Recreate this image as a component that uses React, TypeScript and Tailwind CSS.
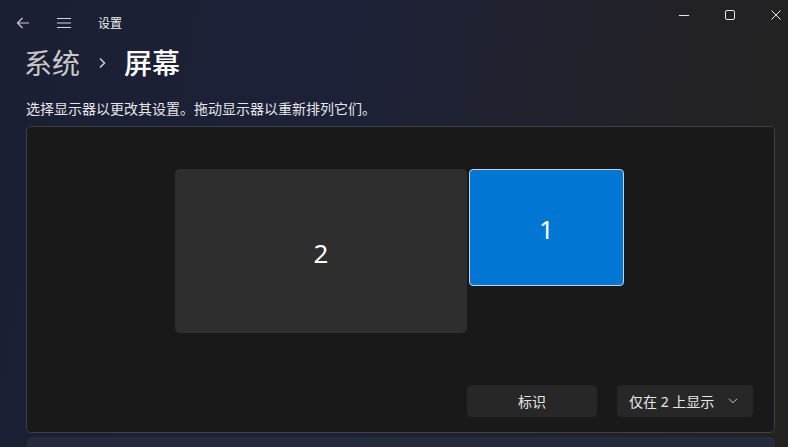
import React from 'react';

const font = { fontFamily: '"Segoe UI", "Noto Sans", "Noto Sans CJK SC", sans-serif' };

const BackIcon = () => (
    <svg width="14" height="12" viewBox="0 0 14 12" fill="none" stroke="#c9ccd6" strokeWidth="1.2">
        <path d="M13 6H1.5M6.5 1L1.5 6l5 5" />
    </svg>
);

const MenuIcon = () => (
    <svg width="16" height="12" viewBox="0 0 16 12" fill="none" stroke="#d4d6de" strokeWidth="1.2">
        <path d="M1 1.5h14M1 6h14M1 10.5h14" />
    </svg>
);

const WindowControls = () => (
    <div className="flex items-center -mr-[11px]">
        <div className="w-[46px] h-[30px] flex items-center justify-center">
            <svg width="10" height="10" viewBox="0 0 10 10"><path d="M0 5.5h10" stroke="#e8e8e8" strokeWidth="1" /></svg>
        </div>
        <div className="w-[46px] h-[30px] flex items-center justify-center">
            <svg width="10" height="10" viewBox="0 0 10 10"><rect x="0.5" y="0.5" width="9" height="9" rx="1.5" fill="none" stroke="#e8e8e8" strokeWidth="1" /></svg>
        </div>
        <div className="w-[46px] h-[30px] flex items-center justify-center">
            <svg width="10" height="10" viewBox="0 0 10 10"><path d="M0.5 0.5l9 9M9.5 0.5l-9 9" stroke="#e8e8e8" strokeWidth="1" /></svg>
        </div>
    </div>
);

const App: React.FC = () => {
    return (
        <div style={font} className="w-[788px] h-[447px] overflow-hidden flex flex-col bg-[linear-gradient(100deg,#1b1f33_0%,#1c2138_40%,#21212a_70%,#23221f_100%)] text-white">
            {/* title bar */}
            <div className="flex items-start justify-between h-[44px]">
                <div className="flex items-center h-[46px] pl-[16px]">
                    <div className="w-[14px] flex items-center"><BackIcon /></div>
                    <div className="ml-[26px]"><MenuIcon /></div>
                    <span className="ml-[26px] mt-[2px] text-[12px] text-[#f2f2f2]">设置</span>
                </div>
                <WindowControls />
            </div>

            {/* breadcrumb */}
            <div className="flex items-center h-[40px] pl-[24px] -mt-[1px]">
                <span className="text-[28px] text-[#c9c9cc] leading-none">系统</span>
                <svg className="ml-[18px]" width="8" height="12" viewBox="0 0 8 12" fill="none" stroke="#c9c9cc" strokeWidth="1.6">
                    <path d="M2 1.5l4.5 4.5L2 10.5" />
                </svg>
                <span className="ml-[18px] text-[28px] font-medium text-white leading-none">屏幕</span>
            </div>

            <p className="pl-[26px] mt-[17px] text-[14px] leading-[18px] text-[#e6e6e9]">选择显示器以更改其设置。拖动显示器以重新排列它们。</p>

            {/* arrangement panel */}
            <div className="ml-[26px] mr-[13px] mt-[8px] h-[307px] shrink-0 bg-[#191919] border border-[#3e4049] rounded-[5px] flex flex-col">
                <div className="flex justify-center items-start gap-[2px] pt-[42px] pr-[2px]">
                    <div className="w-[292px] h-[164px] bg-[#2e2e2e] rounded-[5px] flex items-center justify-center">
                        <span className="pt-[4px] text-[26px] text-white">2</span>
                    </div>
                    <div className="w-[155px] h-[117px] bg-[#0177d3] border border-[#c9cfd6] rounded-[4px] flex items-center justify-center">
                        <span className="pt-[4px] text-[26px] text-white">1</span>
                    </div>
                </div>
                <div className="mt-auto flex justify-end gap-[20px] pr-[21px] pb-[15px]">
                    <div className="w-[130px] h-[32px] bg-[#272727] rounded-[4px] flex items-center justify-center text-[14px] text-[#e8e8e8]">标识</div>
                    <div className="w-[136px] h-[32px] bg-[#272727] rounded-[4px] flex items-center justify-between pl-[12px] pr-[15px] text-[14px] text-[#e8e8e8]">
                        <span>仅在 2 上显示</span>
                        <svg width="10" height="6" viewBox="0 0 10 6" fill="none" stroke="#c8c8c8" strokeWidth="1">
                            <path d="M1 0.8l4 4 4-4" />
                        </svg>
                    </div>
                </div>
            </div>

            {/* next card */}
            <div className="ml-[27px] mr-[13px] mt-[4px] flex-1 bg-[#252a3c] rounded-t-[5px]" />
        </div>
    );
};

export default App;
